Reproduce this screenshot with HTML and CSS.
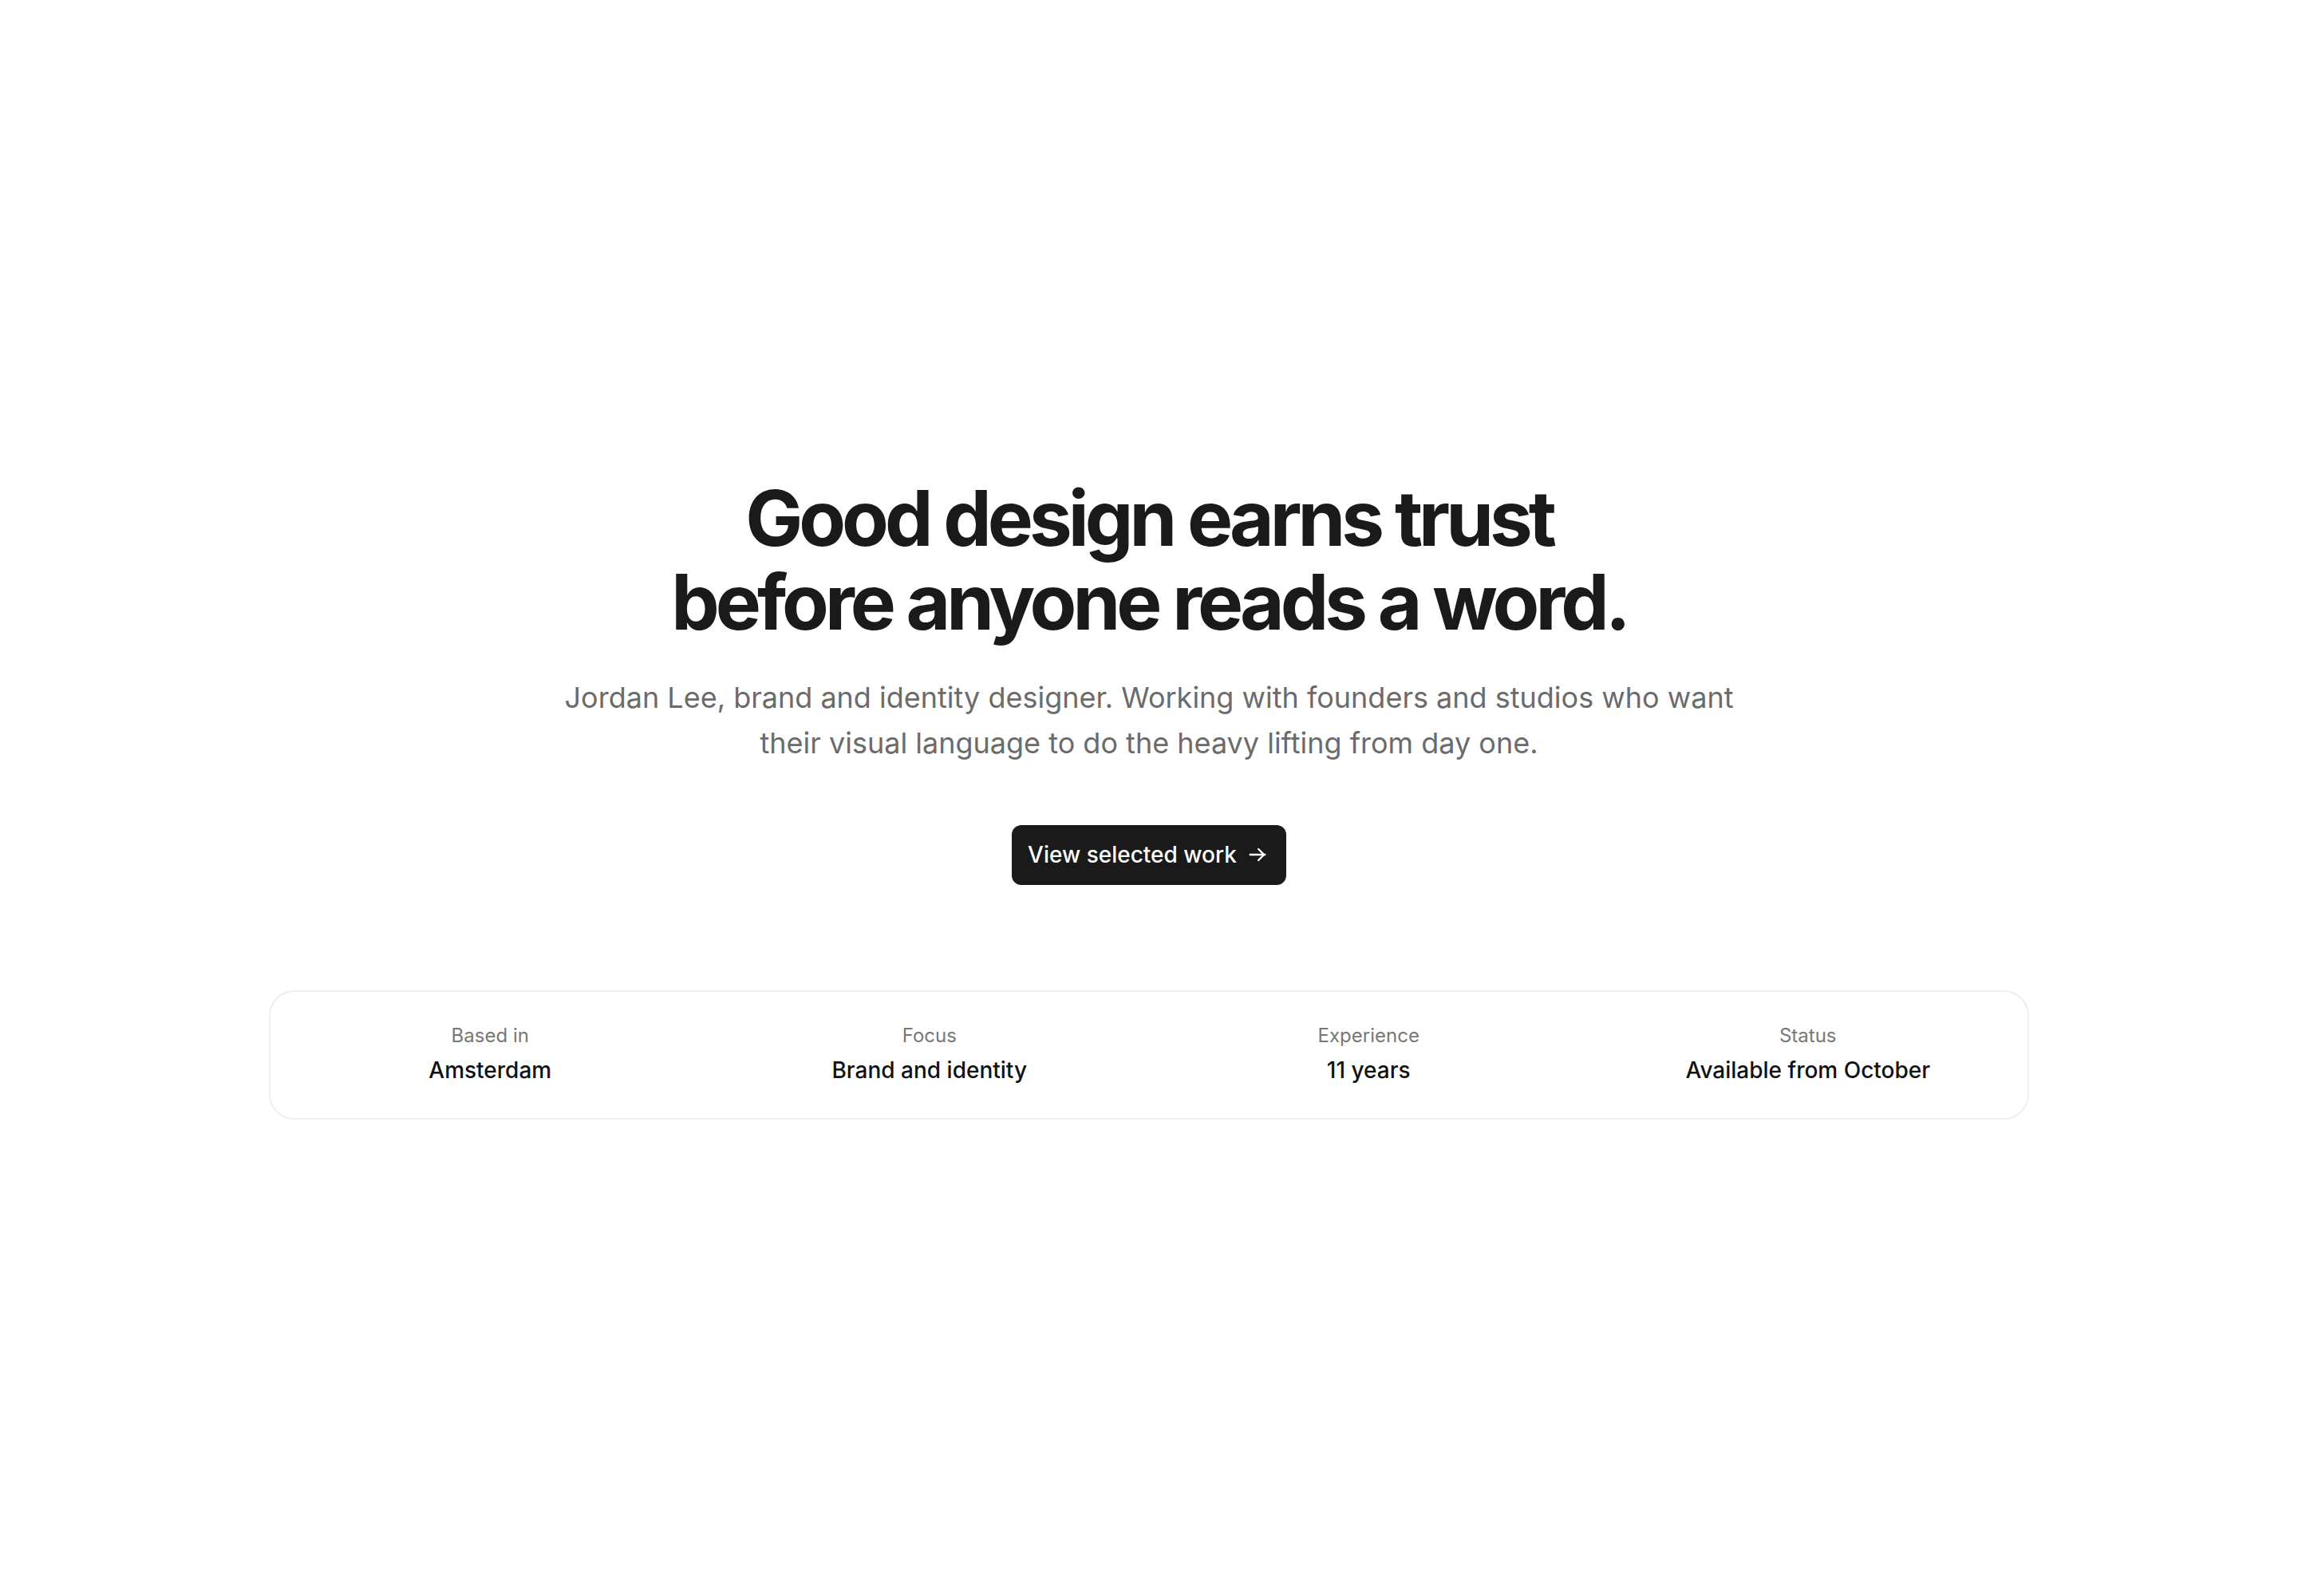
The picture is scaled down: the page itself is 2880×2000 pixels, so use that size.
FILE: index.html
```html
<!DOCTYPE html>
<html lang="en">
<head>
<meta charset="utf-8">
<title>Jordan Lee — Brand and identity designer</title>
<link rel="stylesheet" href="styles.css">
</head>
<body>
<main class="hero">
  <h1 class="hero-title">Good design earns trust<br>before anyone reads a word.</h1>
  <p class="hero-lead">Jordan Lee, brand and identity designer. Working with founders and studios who want their visual language to do the heavy lifting from day one.</p>
  <a class="btn" href="#work">
    <span>View selected work</span>
    <svg class="btn-icon" viewBox="0 0 24 24" fill="none" stroke="currentColor" stroke-width="2" stroke-linecap="round" stroke-linejoin="round" aria-hidden="true"><path d="M4 12h16"/><path d="M13 6l6 6-6 6"/></svg>
  </a>
  <section class="facts">
    <div class="fact">
      <div class="fact-label">Based in</div>
      <div class="fact-value">Amsterdam</div>
    </div>
    <div class="fact">
      <div class="fact-label">Focus</div>
      <div class="fact-value">Brand and identity</div>
    </div>
    <div class="fact">
      <div class="fact-label">Experience</div>
      <div class="fact-value">11 years</div>
    </div>
    <div class="fact">
      <div class="fact-label">Status</div>
      <div class="fact-value">Available from October</div>
    </div>
  </section>
</main>
</body>
</html>
```
FILE: styles.css
```css
* { box-sizing: border-box; }
html, body { margin: 0; padding: 0; }
body {
  background: #ffffff;
  font-family: Inter, "Noto Sans", "Liberation Sans", sans-serif;
  color: #1a1a1a;
}
.hero {
  min-height: 100vh;
  display: flex;
  flex-direction: column;
  align-items: center;
  justify-content: center;
  text-align: center;
}
.hero-title {
  margin: 0;
  font-size: 96px;
  line-height: 1.1;
  font-weight: 650;
  letter-spacing: -0.052em;
  color: #1a1a1a;
}
.hero-lead {
  margin: 38px 0 0;
  max-width: 1500px;
  font-size: 36px;
  line-height: 57px;
  font-weight: 400;
  color: #6b6b6b;
}
.btn {
  margin-top: 74px;
  display: inline-flex;
  align-items: center;
  gap: 12px;
  height: 75px;
  padding: 0 22px 0 20px;
  background: #1a1a1a;
  color: #ffffff;
  border-radius: 12px;
  text-decoration: none;
  font-size: 28px;
  font-weight: 500;
  line-height: 1.4;
}
.btn-icon { width: 28px; height: 28px; }
.facts {
  margin-top: 132px;
  width: 2206px;
  display: grid;
  grid-template-columns: repeat(4, 1fr);
  padding: 38px 0 40px;
  border: 2px solid #efefef;
  border-radius: 32px;
}
.fact-label {
  font-size: 24px;
  line-height: 1.4;
  color: #777777;
}
.fact-value {
  margin-top: 8px;
  font-size: 28px;
  line-height: 1.4;
  font-weight: 500;
  color: #111111;
}
```
